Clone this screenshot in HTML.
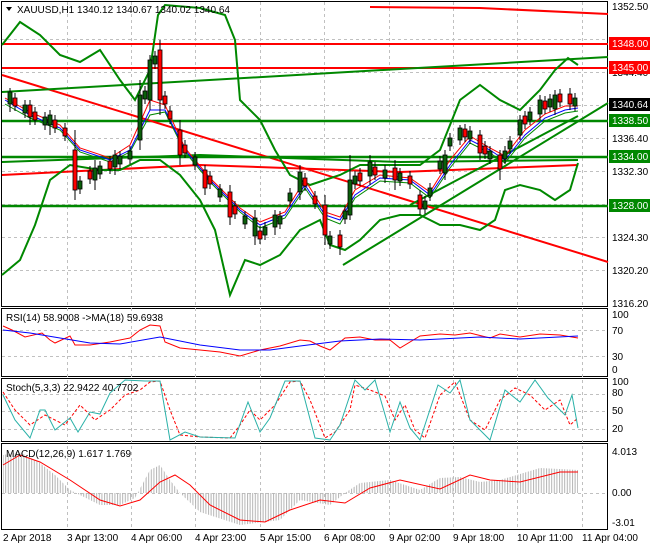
<!DOCTYPE html>
<html><head><style>
body{margin:0;background:#fff;width:650px;height:550px;overflow:hidden;font-family:"Liberation Sans",sans-serif}
svg text{font-family:"Liberation Sans",sans-serif;font-size:10px;fill:#000}
</style></head><body>
<svg width="650" height="550" viewBox="0 0 650 550" xmlns="http://www.w3.org/2000/svg">
<defs>
<pattern id="hp" width="2.6" height="10" patternUnits="userSpaceOnUse"><rect x="0" y="0" width="1" height="10" fill="#b4b4b4"/></pattern>
</defs>
<rect width="650" height="550" fill="#fff"/>
<g fill="none" stroke="#000" stroke-width="1">
<rect x="1.5" y="1.5" width="606" height="305"/>
<rect x="1.5" y="308.5" width="606" height="68"/>
<rect x="1.5" y="378.5" width="606" height="63"/>
<rect x="1.5" y="443.5" width="606" height="86"/>
</g>
<g stroke="#c0c0c0" stroke-dasharray="3,3" stroke-width="1">
<path d="M67.5 2V530M131.5 2V530M195.5 2V530M260.5 2V530M324.5 2V530M389.5 2V530M453.5 2V530M517.5 2V530M582.5 2V530"/>
<path d="M2 39.5H607M2 72.5H607M2 105.5H607M2 138.5H607M2 171.5H607M2 204.5H607M2 237.5H607M2 270.5H607"/>
<path d="M2 330.5H607M2 356.5H607M2 394.5H607M2 411.5H607M2 429.5H607M2 493.5H607"/>
</g>
<path d="M370 7L480 8L608 14" stroke="#f00" stroke-width="2" fill="none"/>
<path d="M2 44H608M2 68H608" stroke="#f00" stroke-width="2"/>
<path d="M2 121H608M2 157H608M2 206H608" stroke="#080" stroke-width="2.5"/>
<path d="M2 75L608 262" stroke="#f00" stroke-width="2"/>
<path d="M2 175L200 165L400 172L578 165" stroke="#f00" stroke-width="2" fill="none"/>
<path d="M2 92L608 57" stroke="#080" stroke-width="2"/>
<path d="M2 162L200 155L400 162L578 160" stroke="#080" stroke-width="2" fill="none"/>
<path d="M343 265L608 103M410 205L578 116" stroke="#080" stroke-width="2"/>
<polyline fill="none" stroke="#080" stroke-width="2" points="2,45 20,22 40,35 60,55 80,62 100,50 120,80 135,100 150,70 158,15 165,5 200,8 225,15 235,40 240,100 260,120 275,150 290,175 310,185 340,175 360,165 400,165 420,165 440,150 460,100 480,85 500,100 520,110 540,90 555,70 568,58 578,65"/>
<polyline fill="none" stroke="#080" stroke-width="2" points="2,275 20,260 35,225 50,180 70,165 100,170 120,170 140,160 160,160 180,175 200,200 215,230 230,295 245,260 260,265 280,255 300,230 320,220 330,245 345,250 360,240 380,220 400,215 420,215 440,225 460,225 480,230 495,220 505,190 520,185 540,190 555,200 570,190 578,163"/>
<polyline fill="none" stroke="#080" stroke-width="1" points="5,104 30,118 60,130 80,152 110,162 130,152 150,115 165,112 185,152 210,182 240,212 260,228 285,218 305,188 325,218 340,224 355,198 380,181 410,183 430,198 450,168 470,143 490,153 505,163 525,138 545,121 565,113 578,111"/>
<polyline fill="none" stroke="#00f" stroke-width="1" points="5,100 30,115 60,128 80,150 110,160 130,150 150,110 165,110 185,150 210,180 240,210 260,225 285,215 305,185 325,215 340,220 355,195 380,178 410,180 430,195 450,165 470,140 490,150 505,160 525,135 545,118 565,110 578,108"/>
<polyline fill="none" stroke="#f00" stroke-width="1" points="5,98 30,112 60,125 80,148 110,158 130,145 150,100 165,105 185,148 210,178 240,208 260,222 285,212 305,180 325,212 340,217 355,190 380,175 410,178 430,192 450,160 470,136 490,148 505,156 525,130 545,114 565,106 578,106"/>
<g stroke="#000" stroke-width="1">
<path d="M10 88V112M30 100V125M50 110V135M75 130V200M95 160V190M115 150V175M140 80V150M150 55V110M160 40V115M180 120V165M205 165V195M230 185V225M255 210V245M275 210V235M300 165V200M325 195V245M340 230V255M350 155V220M370 155V185M395 160V190M420 190V215M445 150V180M460 125V145M480 130V160M500 150V180M520 115V140M540 95V120M555 90V115M570 88V110"/>
<path d="M15 93V111M25 100V118M35 107V125M45 112V130M55 115V133M65 123V141M80 176V194M90 166V184M100 161V179M110 156V174M120 151V169M130 146V164M145 86V104M155 51V69M165 91V109M170 106V124M185 140V158M195 152V170M210 171V189M220 184V202M235 201V219M245 211V229M260 226V244M265 222V240M280 211V229M290 188V206M305 173V191M315 191V209M330 231V249M345 206V224M355 171V189M360 168V186M375 162V180M385 165V183M400 168V186M410 171V189M425 196V214M430 183V201M440 156V174M450 133V151M465 124V142M470 126V144M485 141V159M490 146V164M505 146V164M510 136V154M525 111V129M530 107V125M545 96V114M550 94V112M560 89V107M575 93V111"/>
</g>
<g stroke="#000" stroke-width="0.8">
<rect x="8" y="92" width="4" height="12" fill="#0a5f0a"/><rect x="28" y="105" width="4" height="12" fill="#f00"/><rect x="48" y="115" width="4" height="10" fill="#0a5f0a"/><rect x="73" y="150" width="4" height="40" fill="#f00"/><rect x="93" y="168" width="4" height="12" fill="#0a5f0a"/><rect x="113" y="155" width="4" height="12" fill="#0a5f0a"/><rect x="138" y="95" width="4" height="45" fill="#0a5f0a"/><rect x="148" y="60" width="4" height="40" fill="#0a5f0a"/><rect x="158" y="50" width="4" height="50" fill="#f00"/><rect x="178" y="130" width="4" height="25" fill="#f00"/><rect x="203" y="170" width="4" height="18" fill="#f00"/><rect x="228" y="192" width="4" height="25" fill="#f00"/><rect x="253" y="218" width="4" height="18" fill="#0a5f0a"/><rect x="273" y="215" width="4" height="12" fill="#0a5f0a"/><rect x="298" y="172" width="4" height="20" fill="#0a5f0a"/><rect x="323" y="205" width="4" height="30" fill="#f00"/><rect x="338" y="235" width="4" height="12" fill="#f00"/><rect x="348" y="180" width="4" height="35" fill="#0a5f0a"/><rect x="368" y="162" width="4" height="14" fill="#0a5f0a"/><rect x="393" y="168" width="4" height="12" fill="#f00"/><rect x="418" y="195" width="4" height="14" fill="#f00"/><rect x="443" y="155" width="4" height="18" fill="#0a5f0a"/><rect x="458" y="128" width="4" height="12" fill="#0a5f0a"/><rect x="478" y="135" width="4" height="18" fill="#f00"/><rect x="498" y="155" width="4" height="14" fill="#f00"/><rect x="518" y="120" width="4" height="15" fill="#0a5f0a"/><rect x="538" y="100" width="4" height="14" fill="#0a5f0a"/><rect x="553" y="95" width="4" height="14" fill="#0a5f0a"/><rect x="568" y="94" width="4" height="10" fill="#f00"/>
</g>
<g stroke="#000" stroke-width="0.8">
<rect x="13" y="98" width="4" height="8" fill="#f00"/><rect x="23" y="105" width="4" height="8" fill="#0a5f0a"/><rect x="33" y="112" width="4" height="8" fill="#f00"/><rect x="43" y="117" width="4" height="8" fill="#0a5f0a"/><rect x="53" y="120" width="4" height="8" fill="#f00"/><rect x="63" y="128" width="4" height="8" fill="#f00"/><rect x="78" y="181" width="4" height="8" fill="#0a5f0a"/><rect x="88" y="171" width="4" height="8" fill="#f00"/><rect x="98" y="166" width="4" height="8" fill="#0a5f0a"/><rect x="108" y="161" width="4" height="8" fill="#f00"/><rect x="118" y="156" width="4" height="8" fill="#0a5f0a"/><rect x="128" y="151" width="4" height="8" fill="#0a5f0a"/><rect x="143" y="91" width="4" height="8" fill="#0a5f0a"/><rect x="153" y="56" width="4" height="8" fill="#0a5f0a"/><rect x="163" y="96" width="4" height="8" fill="#f00"/><rect x="168" y="111" width="4" height="8" fill="#f00"/><rect x="183" y="145" width="4" height="8" fill="#f00"/><rect x="193" y="157" width="4" height="8" fill="#0a5f0a"/><rect x="208" y="176" width="4" height="8" fill="#f00"/><rect x="218" y="189" width="4" height="8" fill="#0a5f0a"/><rect x="233" y="206" width="4" height="8" fill="#f00"/><rect x="243" y="216" width="4" height="8" fill="#0a5f0a"/><rect x="258" y="231" width="4" height="8" fill="#f00"/><rect x="263" y="227" width="4" height="8" fill="#0a5f0a"/><rect x="278" y="216" width="4" height="8" fill="#0a5f0a"/><rect x="288" y="193" width="4" height="8" fill="#0a5f0a"/><rect x="303" y="178" width="4" height="8" fill="#f00"/><rect x="313" y="196" width="4" height="8" fill="#f00"/><rect x="328" y="236" width="4" height="8" fill="#0a5f0a"/><rect x="343" y="211" width="4" height="8" fill="#0a5f0a"/><rect x="353" y="176" width="4" height="8" fill="#0a5f0a"/><rect x="358" y="173" width="4" height="8" fill="#f00"/><rect x="373" y="167" width="4" height="8" fill="#f00"/><rect x="383" y="170" width="4" height="8" fill="#0a5f0a"/><rect x="398" y="173" width="4" height="8" fill="#0a5f0a"/><rect x="408" y="176" width="4" height="8" fill="#f00"/><rect x="423" y="201" width="4" height="8" fill="#0a5f0a"/><rect x="428" y="188" width="4" height="8" fill="#0a5f0a"/><rect x="438" y="161" width="4" height="8" fill="#0a5f0a"/><rect x="448" y="138" width="4" height="8" fill="#0a5f0a"/><rect x="463" y="129" width="4" height="8" fill="#f00"/><rect x="468" y="131" width="4" height="8" fill="#0a5f0a"/><rect x="483" y="146" width="4" height="8" fill="#f00"/><rect x="488" y="151" width="4" height="8" fill="#0a5f0a"/><rect x="503" y="151" width="4" height="8" fill="#0a5f0a"/><rect x="508" y="141" width="4" height="8" fill="#0a5f0a"/><rect x="523" y="116" width="4" height="8" fill="#f00"/><rect x="528" y="112" width="4" height="8" fill="#0a5f0a"/><rect x="543" y="101" width="4" height="8" fill="#f00"/><rect x="548" y="99" width="4" height="8" fill="#0a5f0a"/><rect x="558" y="94" width="4" height="8" fill="#f00"/><rect x="573" y="98" width="4" height="8" fill="#0a5f0a"/>
</g>
<path d="M6 7L12 7L9 11Z" fill="#000"/>
<text x="17" y="13" font-size="10">XAUUSD,H1  1340.12 1340.67 1340.02 1340.64</text>
<g font-size="10">
<text x="612" y="10">1352.50</text>
<text x="612" y="76">1344.40</text>
<text x="612" y="142">1336.40</text>
<text x="612" y="175">1332.30</text>
<text x="612" y="241">1324.30</text>
<text x="612" y="274">1320.20</text>
<text x="612" y="307">1316.20</text>
</g>
<rect x="609" y="37" width="41" height="13" fill="#f00"/><text x="612" y="47" style="fill:#fff">1348.00</text>
<rect x="609" y="61" width="41" height="13" fill="#f00"/><text x="612" y="71" style="fill:#fff">1345.00</text>
<rect x="609" y="98" width="41" height="13" fill="#000"/><text x="612" y="108" style="fill:#fff">1340.64</text>
<rect x="609" y="114" width="41" height="13" fill="#080"/><text x="612" y="124" style="fill:#fff">1338.50</text>
<rect x="609" y="150" width="41" height="13" fill="#080"/><text x="612" y="160" style="fill:#fff">1334.00</text>
<rect x="609" y="199" width="41" height="13" fill="#080"/><text x="612" y="209" style="fill:#fff">1328.00</text>
<polyline fill="none" stroke="#f00" stroke-width="1" points="3,326 12,330 25,337 42,333 50,340 55,343 70,336 75,345 90,345 110,342 130,338 140,330 150,325 160,326 165,342 180,348 200,350 220,352 240,356 260,350 280,346 300,340 310,341 320,346 330,350 345,338 360,337 375,340 390,340 400,348 420,336 440,334 455,335 470,333 490,338 500,334 520,337 540,334 560,335 578,338"/>
<polyline fill="none" stroke="#00f" stroke-width="1" points="3,330 30,333 60,338 90,343 120,344 160,337 200,345 240,350 270,350 300,346 340,341 380,339 420,340 440,339 480,337 520,339 578,336"/>
<text x="6" y="321">RSI(14) 58.9008  -&gt;MA(18) 59.6938</text>
<g font-size="9"><text x="612" y="318">100</text><text x="612" y="334">70</text><text x="612" y="360">30</text><text x="612" y="373">0</text></g>
<polyline fill="none" stroke="#f00" stroke-width="1" stroke-dasharray="3,2" points="3,392 15,410 30,425 45,415 55,420 65,425 80,405 95,420 110,410 125,395 140,390 150,382 160,381 170,410 180,435 200,437 230,438 240,425 250,410 260,420 275,405 290,382 300,381 310,400 325,438 335,432 350,410 355,385 370,390 385,396 395,420 405,405 415,430 425,438 440,395 455,382 470,420 485,430 500,400 515,388 530,395 545,410 560,400 570,425 578,418"/>
<polyline fill="none" stroke="#2ab1a8" stroke-width="1" points="3,395 15,420 30,438 40,410 45,410 55,430 70,418 78,432 90,412 100,414 110,393 125,380 145,381 160,381 170,440 185,432 200,437 235,438 248,402 260,432 270,418 285,381 300,381 315,438 330,440 340,425 355,380 365,390 375,380 390,432 400,402 410,428 420,440 438,385 450,393 460,380 470,420 480,430 490,440 505,390 520,402 535,380 548,398 565,415 572,395 578,428"/>
<text x="6" y="391">Stoch(5,3,3) 22.9422 40.7702</text>
<g font-size="9"><text x="612" y="385">100</text><text x="612" y="396">80</text><text x="612" y="414">50</text><text x="612" y="432">20</text></g>
<polygon fill="url(#hp)" points="3,493 3,455 20,452 40,463 55,475 70,490 80,495 100,505 120,505 135,498 150,470 160,465 170,480 180,493 200,512 240,525 280,520 300,500 330,505 345,493 360,483 390,480 420,490 440,478 460,477 480,482 500,480 520,474 540,468 578,470 578,493"/>
<polyline fill="none" stroke="#f00" stroke-width="1" points="3,465 20,455 40,462 70,480 100,500 120,506 140,500 160,482 175,475 190,485 210,505 240,520 265,522 290,510 320,500 345,503 370,488 400,480 440,489 470,475 490,480 520,482 560,472 578,472"/>
<text x="6" y="457">MACD(12,26,9) 1.617 1.769</text>
<g font-size="9"><text x="612" y="455">4.013</text><text x="612" y="496">0.00</text><text x="612" y="526">-3.01</text></g>
<g font-size="9"><text x="3" y="541">2 Apr 2018</text><text x="67" y="541">3 Apr 13:00</text><text x="131" y="541">4 Apr 06:00</text><text x="195" y="541">4 Apr 23:00</text><text x="260" y="541">5 Apr 15:00</text><text x="324" y="541">6 Apr 08:00</text><text x="389" y="541">9 Apr 02:00</text><text x="453" y="541">9 Apr 18:00</text><text x="517" y="541">10 Apr 11:00</text><text x="582" y="541">11 Apr 04:00</text></g>
</svg>
</body></html>
